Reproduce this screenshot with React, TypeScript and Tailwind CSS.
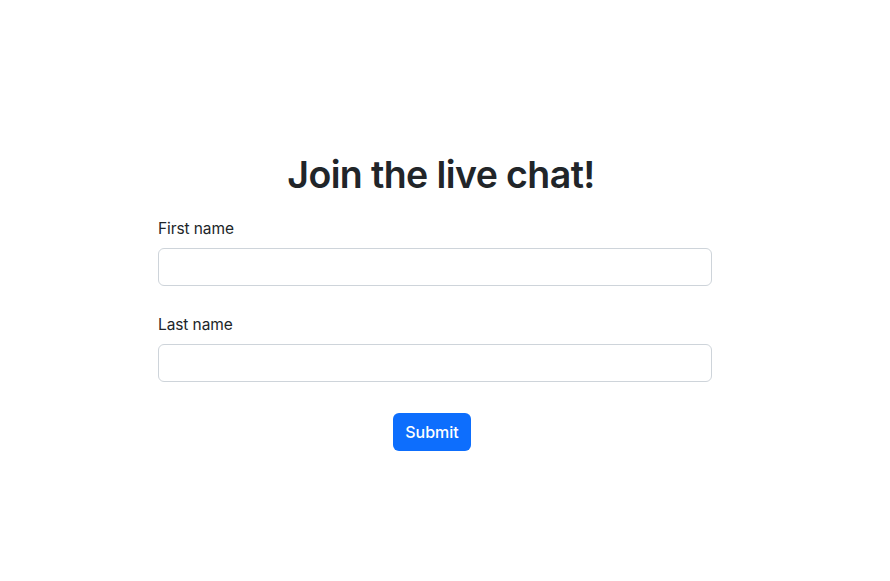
export default function App() {
  return (
    <div className="min-h-[581px] bg-white font-['Inter',sans-serif] text-[#212529]">
      <div className="ml-[158px] w-[554px] pt-[154px]">
        <h1 className="pl-[12px] text-center text-[37.5px] font-semibold leading-[42px] tracking-[-0.6px]">
          Join the live chat!
        </h1>
        <form className="mt-[20px]" onSubmit={(e) => e.preventDefault()}>
          <div>
            <label className="block pt-[1px] text-[15.5px] leading-[24px] tracking-[-0.1px]">First name</label>
            <input
              type="text"
              className="mt-[7px] block h-[38px] w-full rounded-[6px] border border-[#ced4da] px-3 outline-none"
            />
          </div>
          <div className="mt-[26px]">
            <label className="block pt-[1px] text-[15.5px] leading-[24px] tracking-[-0.1px]">Last name</label>
            <input
              type="text"
              className="mt-[7px] block h-[38px] w-full rounded-[6px] border border-[#ced4da] px-3 outline-none"
            />
          </div>
          <div className="mt-[31px] flex justify-center pr-[6px]">
            <button
              type="submit"
              className="h-[38px] w-[78px] rounded-[6px] bg-[#0d6efd] text-[16px] font-medium text-white"
            >
              Submit
            </button>
          </div>
        </form>
      </div>
    </div>
  );
}
